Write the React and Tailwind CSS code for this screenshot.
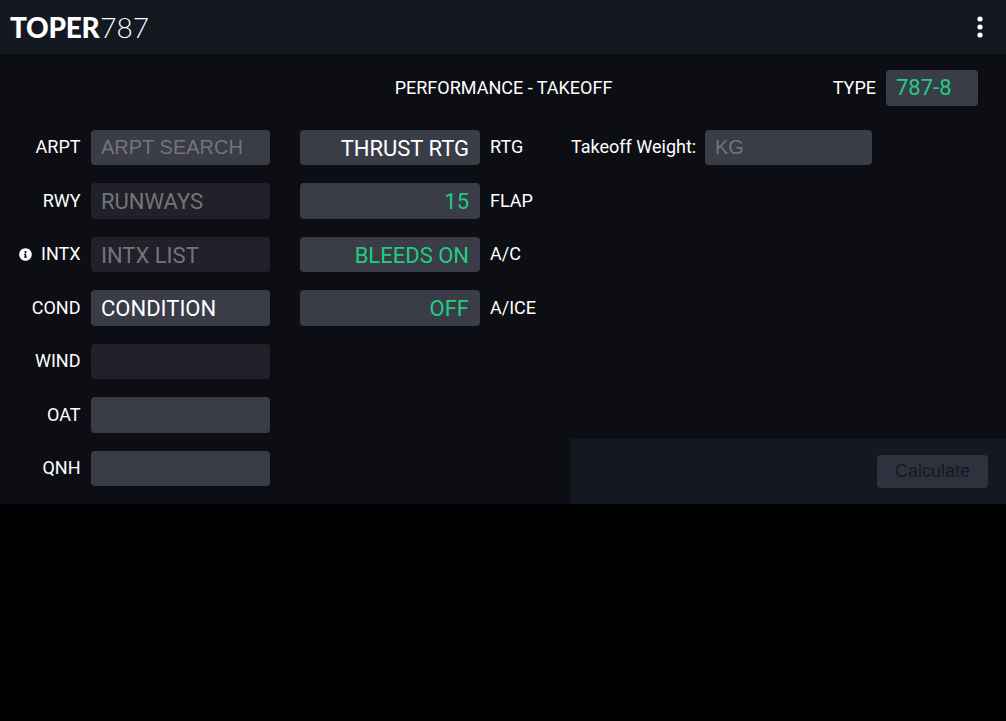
import React from "react";
import { FaInfoCircle } from "react-icons/fa";

function Field({ children, dim, right, tone = "text-white", width = "w-[179px]", arial }) {
  return (
    <div
      className={`${width} h-[35.5px] rounded-[4px] pl-[10px] pr-[11px] flex items-center leading-none whitespace-nowrap ${arial ? "font-['Liberation_Sans',sans-serif] text-[20px] pb-[1px]" : "text-[22px] pt-[2px]"} ${dim ? "bg-[#20212a]" : "bg-[#3a3c48]"} ${right ? "justify-end" : ""} ${tone}`}
    >
      {children}
    </div>
  );
}

function LeftRow({ label, info, value, dim, tone, arial }) {
  return (
    <div className="flex items-center">
      <div className="w-[80.5px] flex items-center justify-end gap-[9px] text-white text-lg leading-none -mt-[0.5px]">
        {info && <FaInfoCircle className="w-[13px] h-[13px]" />}
        <span>{label}</span>
      </div>
      <div className="ml-[10.5px]">
        <Field dim={dim} tone={tone} arial={arial}>{value}</Field>
      </div>
    </div>
  );
}

function MiddleRow({ label, value, green }) {
  return (
    <div className="flex items-center">
      <Field right width="w-[180px]" tone={green ? "text-[#22cc82]" : "text-white"}>{value}</Field>
      <span className="ml-[10px] text-white text-lg leading-none -mt-px">{label}</span>
    </div>
  );
}

export default function App() {
  const muted = "text-[#757575]";
  return (
    <div className="min-h-[721px] bg-black font-['Roboto',sans-serif]">
      <header className="h-[54px] bg-[#141821] flex items-center justify-between pl-[10px] pr-[22px]">
        <div className="font-['Lato',sans-serif] text-[28px] leading-none text-white flex">
          <span className="font-black tracking-[-0.3px]">TOPER</span>
          <span className="font-light ml-[1px]">787</span>
        </div>
        <svg width="8" height="24" viewBox="0 0 8 24" className="text-white" fill="currentColor">
          <circle cx="4" cy="4" r="2.6" />
          <circle cx="4" cy="12" r="2.6" />
          <circle cx="4" cy="20" r="2.6" />
        </svg>
      </header>

      <main className="h-[450px] bg-[#0d0e13] pt-4 flex flex-col">
        <div className="grid grid-cols-[1fr_auto_1fr] items-center">
          <div />
          <h1 className="text-white text-lg font-normal leading-none ml-px">PERFORMANCE - TAKEOFF</h1>
          <div className="flex items-center justify-end pr-[28px]">
            <span className="text-white text-lg leading-none mr-[10px]">TYPE</span>
            <div className="w-[92px] h-9 rounded-[4px] bg-[#3a3c48] px-[10px] flex items-center text-[22px] leading-none text-[#22cc82]">787-8</div>
          </div>
        </div>

        <div className="flex flex-1 mt-[23.9px]">
          <div className="w-[300px] flex flex-col gap-[18px]">
            <LeftRow label="ARPT" value="ARPT SEARCH" tone={muted} arial />
            <LeftRow label="RWY" value="RUNWAYS" dim tone={muted} />
            <LeftRow label="INTX" info value="INTX LIST" dim tone={muted} />
            <LeftRow label="COND" value="CONDITION" />
            <LeftRow label="WIND" value="" dim />
            <LeftRow label="OAT" value="" />
            <LeftRow label="QNH" value="" />
          </div>

          <div className="w-[270px] flex flex-col gap-[18px]">
            <MiddleRow label="RTG" value="THRUST RTG" />
            <MiddleRow label="FLAP" value="15" green />
            <MiddleRow label="A/C" value="BLEEDS ON" green />
            <MiddleRow label="A/ICE" value="OFF" green />
          </div>

          <div className="flex-1 flex flex-col justify-between">
            <div className="flex items-center">
              <span className="w-[135px] pl-px text-white text-lg leading-none -mt-px">Takeoff Weight:</span>
              <Field width="w-[167px]" tone={muted} arial>KG</Field>
            </div>
            <div className="h-[65px] bg-[#141821] flex items-center justify-end pr-[18px]">
              <button className="w-[111px] h-[33px] pb-[2px] rounded-[4px] bg-[#2f313e] text-[#151922] text-lg font-['Liberation_Sans',sans-serif]">
                Calculate
              </button>
            </div>
          </div>
        </div>
      </main>
    </div>
  );
}
